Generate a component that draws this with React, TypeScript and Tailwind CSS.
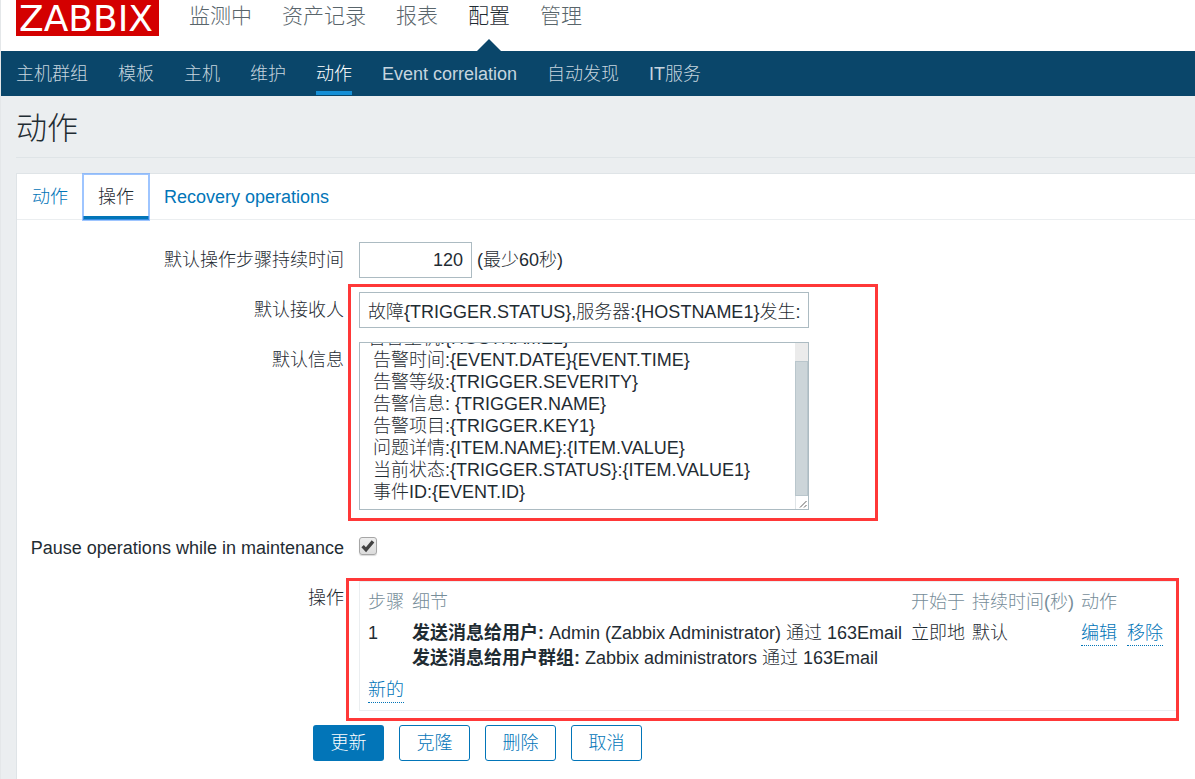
import { useLayoutEffect, useRef } from "react";
import type { ReactNode } from "react";

const mainMenu = ["监测中", "资产记录", "报表", "配置", "管理"];
const subMenu = ["主机群组", "模板", "主机", "维护", "动作", "Event correlation", "自动发现", "IT服务"];

const message = [
  "告警主机:{HOSTNAME1}",
  " 告警时间:{EVENT.DATE}{EVENT.TIME}",
  " 告警等级:{TRIGGER.SEVERITY}",
  " 告警信息: {TRIGGER.NAME}",
  " 告警项目:{TRIGGER.KEY1}",
  " 问题详情:{ITEM.NAME}:{ITEM.VALUE}",
  " 当前状态:{TRIGGER.STATUS}:{ITEM.VALUE1}",
  " 事件ID:{EVENT.ID}",
].join("\n");

function MainNav() {
  return (
    <header className="flex h-[51px] items-start bg-white pl-[15px]">
      <a href="#home" className="h-9 w-[143px] shrink-0 bg-[#d40000] pl-[3px] font-['DejaVu_Sans',sans-serif] text-[36px] leading-[37px] font-normal text-white">
        ZABBIX
      </a>
      <nav className="ml-[30px] flex gap-[30px] text-[21px]">
        {mainMenu.map((item) => (
          <a key={item} href="#menu" className={item === "配置" ? "relative h-[51px] leading-8 text-[#1f2c33]" : "h-[51px] leading-8 text-[#59656b]"}>
            {item}
            {item === "配置" && (
              <svg viewBox="0 0 24 12" className="absolute bottom-0 left-1/2 h-3 w-6 -translate-x-1/2 fill-[#0a466a]" aria-hidden="true">
                <path d="M12 0L24 12H0z" />
              </svg>
            )}
          </a>
        ))}
      </nav>
    </header>
  );
}

function SubNav() {
  return (
    <nav className="flex h-[45px] gap-[30px] bg-[#0a466a] px-[15px]">
      {subMenu.map((item) => (
        <a
          key={item}
          href="#section"
          className={
            item === "动作"
              ? "h-11 shrink-0 border-b-4 border-[#158fd6] leading-[46px] whitespace-nowrap text-white"
              : "h-11 shrink-0 leading-[46px] whitespace-nowrap text-[#c6d5df]"
          }
        >
          {item}
        </a>
      ))}
    </nav>
  );
}

function DottedLink({ children }: { children: ReactNode }) {
  return (
    <a href="#edit" className="inline-block border-b border-dotted border-[#0275b8] leading-6 text-[#0275b8]">
      {children}
    </a>
  );
}

function MessageBox() {
  const ref = useRef<HTMLTextAreaElement>(null);
  useLayoutEffect(() => {
    if (ref.current) ref.current.scrollTop = ref.current.scrollHeight;
  }, []);
  return (
    <div className="relative">
      <textarea
        id="message"
        ref={ref}
        defaultValue={message}
        className="block h-[168px] w-full resize-none overflow-y-scroll border border-[#acbbc2] bg-white px-2 py-[6px] leading-[22px] outline-none [scrollbar-width:none]"
      />
      <div className="pointer-events-none absolute top-px right-px bottom-px flex w-[13px] flex-col" aria-hidden="true">
        <div className="h-[18px] bg-[#ebebeb]" />
        <div className="flex-1 border border-[#b9c6cc] bg-[#ccd5d9]" />
        <svg viewBox="0 0 13 13" className="h-[13px] w-[13px] bg-white">
          <path d="M0.5 0V13" stroke="#dfe4e7" />
          <path d="M5 11.5L11.5 5M9 11.5L11.5 9" stroke="#5f5f5f" strokeWidth="1" />
        </svg>
      </div>
    </div>
  );
}

function OperationsTable() {
  return (
    <div className="relative h-[130px] w-[818px] border border-[#ebeef0] pt-[7px] pl-2">
      <table className="w-full table-fixed border-collapse text-left">
        <colgroup>
          <col className="w-11" />
          <col className="w-[499px]" />
          <col className="w-[61px]" />
          <col className="w-[109px]" />
          <col />
        </colgroup>
        <thead className="text-[#768d99]">
          <tr>
            {["步骤", "细节", "开始于", "持续时间(秒)", "动作"].map((h) => (
              <th key={h} className="p-0 leading-[26px] font-light whitespace-nowrap">{h}</th>
            ))}
          </tr>
        </thead>
        <tbody>
          <tr className="align-top leading-[25px] whitespace-nowrap">
            <td className="pt-[6px]">1</td>
            <td className="pt-[6px]">
              <b className="font-bold">发送消息给用户:</b> Admin (Zabbix Administrator) 通过 163Email
              <br />
              <b className="font-bold">发送消息给用户群组:</b> Zabbix administrators 通过 163Email
            </td>
            <td className="pt-[6px]">立即地</td>
            <td className="pt-[6px]">默认</td>
            <td className="pt-[6px]">
              <span className="flex gap-[10px]">
                <DottedLink>编辑</DottedLink>
                <DottedLink>移除</DottedLink>
              </span>
            </td>
          </tr>
          <tr>
            <td colSpan={5} className="pt-[7px]">
              <DottedLink>新的</DottedLink>
            </td>
          </tr>
        </tbody>
      </table>
      <div className="pointer-events-none absolute -top-[4px] -right-[3px] -bottom-[11px] -left-[14px] border-[3px] border-[#ff3838]" />
    </div>
  );
}

export default function App() {
  const label = "text-right leading-9 whitespace-nowrap";
  const secondary = "h-9 w-[71px] rounded-[3px] border border-[#0275b8] bg-white text-[#0275b8]";
  return (
    <div className="min-h-screen overflow-x-hidden border-l border-[#e4e7e9] bg-[#ebeef0] font-['Liberation_Sans','Noto_Sans_CJK_SC',sans-serif] text-[18px] leading-6 font-light text-[#1f2c33]">
      <MainNav />
      <SubNav />
      <main className="pl-[15px]">
        <h1 className="h-[62px] border-b border-[#dfe4e7] text-[31px] leading-[66px] font-light">动作</h1>
        <section className="mt-[15px] min-h-[606px] border-t border-l border-[#dfe4e7] bg-white">
          <div className="flex h-[46px] border-b border-[#ebeef0]" role="tablist">
            <button role="tab" className="px-[15px] text-[#0275b8]">动作</button>
            <button role="tab" aria-selected="true" className="relative z-10 -mb-px border-b-4 border-[#0275b8] px-[15px] pt-1 outline-2 -outline-offset-1 outline-[#5e9eff]/60">
              操作
            </button>
            <button role="tab" className="px-[15px] text-[#0275b8]">Recovery operations</button>
          </div>
          <form className="grid grid-cols-[327px_1fr] gap-x-[15px] pt-[22px]" onSubmit={(e) => e.preventDefault()}>
            <label htmlFor="period" className={label}>默认操作步骤持续时间</label>
            <div className="flex items-center gap-[5px]">
              <input id="period" defaultValue="120" className="h-9 w-[113px] border border-[#acbbc2] bg-white px-2 text-right outline-none" />
              <span>(最少60秒)</span>
            </div>

            <div className={"mt-[14px] grid content-start gap-[14px] " + label}>
              <label htmlFor="subject">默认接收人</label>
              <label htmlFor="message">默认信息</label>
            </div>
            <div className="relative mt-[14px] grid w-[450px] gap-[14px]">
              <input id="subject" defaultValue="故障{TRIGGER.STATUS},服务器:{HOSTNAME1}发生:" className="h-9 w-full border border-[#acbbc2] bg-white pr-1 pb-px pl-2 outline-none" />
              <MessageBox />
              <div className="pointer-events-none absolute -top-2 -right-[69px] -bottom-[11px] -left-[11px] border-[3px] border-[#ff3838]" />
            </div>

            <label htmlFor="pause" className={"mt-5 " + label}>Pause operations while in maintenance</label>
            <div className="mt-5 flex h-8 items-center">
              <span className="relative h-[18px] w-[18px]">
                <input
                  id="pause"
                  type="checkbox"
                  defaultChecked
                  className="peer block h-[18px] w-[18px] appearance-none rounded-[3px] border border-[#a6a6a6] bg-linear-to-b from-[#eeeeee] to-[#dcdcdc] shadow-[0_1px_1px_rgba(0,0,0,0.15)]"
                />
                <svg viewBox="0 0 18 18" className="pointer-events-none absolute inset-0 hidden h-[18px] w-[18px] peer-checked:block" aria-hidden="true">
                  <path d="M3.6 9.2L7 12.8L14 4.4" fill="none" stroke="#424242" strokeWidth="3.4" />
                </svg>
              </span>
            </div>

            <div className={"mt-[14px] " + label}>操作</div>
            <div className="mt-[15px]">
              <OperationsTable />
            </div>

            <div />
            <div className="mt-[14px] -ml-[46px] flex gap-[15px]">
              <button type="submit" className="h-9 w-[71px] rounded-[3px] bg-[#0275b8] text-white">更新</button>
              <button type="button" className={secondary}>克隆</button>
              <button type="button" className={secondary}>删除</button>
              <button type="button" className={secondary}>取消</button>
            </div>
          </form>
        </section>
      </main>
    </div>
  );
}
